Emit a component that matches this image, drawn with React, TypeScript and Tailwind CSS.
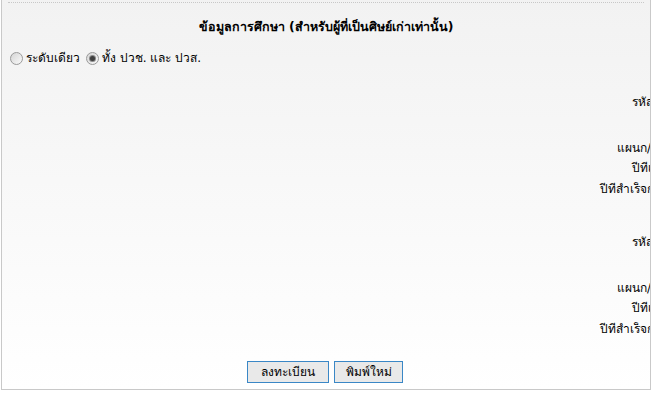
import React from "react";

const font = { fontFamily: "Tahoma, 'DejaVu Sans', 'Noto Sans', sans-serif" };

function Radio({ checked }: { checked?: boolean }) {
  return (
    <span className="flex h-[13px] w-[13px] items-center justify-center rounded-full border border-[#9a9a9a] bg-gradient-to-br from-[#d4d4d4] to-[#fbfbfb]">
      {checked ? (
        <span className="h-[5px] w-[5px] rounded-full bg-[#3f3f3f] ring-1 ring-[#8a8a8a]" />
      ) : null}
    </span>
  );
}

function Group() {
  return (
    <div className="flex flex-col text-[12px] leading-[15px] text-black">
      <div className="overflow-hidden whitespace-nowrap">
        <span className="inline-block ml-[630px]">รหัสนักศึกษา :</span>
      </div>
      <div className="overflow-hidden whitespace-nowrap mt-[31px]">
        <span className="inline-block ml-[615px]">แผนก/สาขาวิชา :</span>
      </div>
      <div className="overflow-hidden whitespace-nowrap mt-[5px]">
        <span className="inline-block ml-[630px]">ปีที่เข้าศึกษา :</span>
      </div>
      <div className="overflow-hidden whitespace-nowrap mt-[6px]">
        <span className="inline-block ml-[598px]">ปีที่สำเร็จการศึกษา :</span>
      </div>
    </div>
  );
}

export default function App() {
  return (
    <div className="w-[652px] h-[393px] bg-white overflow-hidden" style={font}>
      <div className="ml-px w-[650px] h-[390px] border-x border-b border-[#c9c9c9] bg-gradient-to-b from-[#f2f2f2] to-white flex flex-col overflow-hidden">
        <div className="mx-[6px] mt-[2px] border-t border-dotted border-[#c8c8c8]" />
        <div className="mt-[16px] text-center text-[12.5px] font-bold leading-[15px] text-black">
          ข้อมูลการศึกษา (สำหรับผู้ที่เป็นศิษย์เก่าเท่านั้น)
        </div>
        <div className="mt-[17px] ml-[8px] flex items-center text-[12px] leading-[15px] text-black">
          <div className="flex items-center gap-[3px]">
            <Radio />
            <span>ระดับเดียว</span>
          </div>
          <div className="ml-[6px] flex items-center gap-[3px]">
            <Radio checked />
            <span>ทั้ง ปวช. และ ปวส.</span>
          </div>
        </div>
        <div className="mt-[29px]">
          <Group />
        </div>
        <div className="mt-[38px]">
          <Group />
        </div>
        <div className="mt-[24px] ml-[245px] flex gap-[5px]">
          <button className="h-[22px] w-[82px] border border-[#3a87c6] bg-[#e9e9e9] text-[12px] text-black">
            ลงทะเบียน
          </button>
          <button className="h-[22px] w-[69px] border border-[#3a87c6] bg-[#e9e9e9] text-[12px] text-black">
            พิมพ์ใหม่
          </button>
        </div>
      </div>
    </div>
  );
}
